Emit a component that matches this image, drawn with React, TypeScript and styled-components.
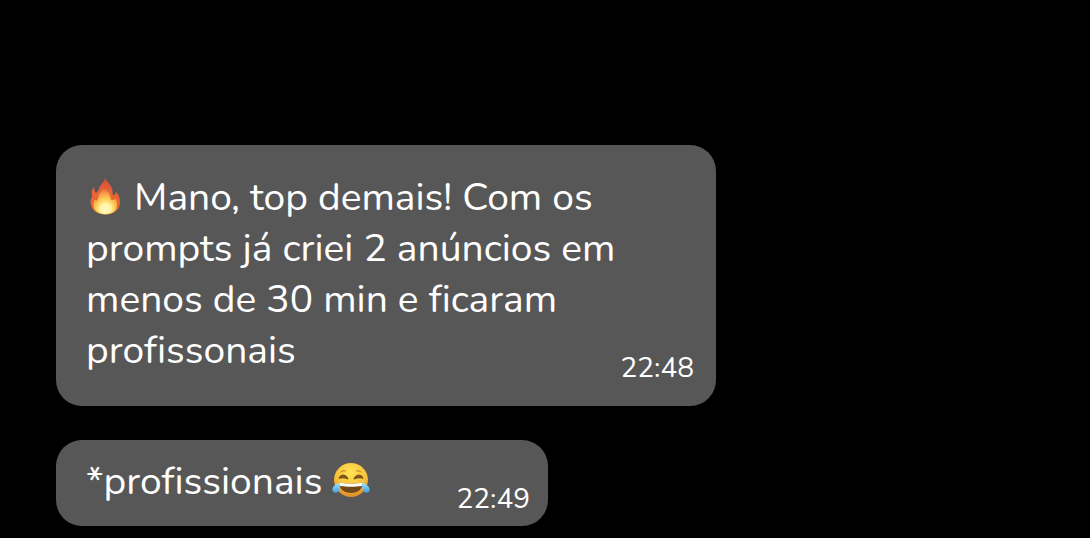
import React from 'react';
import styled, { createGlobalStyle } from 'styled-components';

const GlobalStyle = createGlobalStyle`
  *, *::before, *::after { box-sizing: border-box; }
  html { background: #000; }
  body {
    margin: 0;
    background: #000;
    color: #fff;
    font-family: Nunito, 'Noto Sans', sans-serif;
  }
`;

const Chat = styled.main`
  display: flex;
  flex-direction: column;
  align-items: flex-start;
  gap: 34px;
  padding: 145px 56px 12px;
`;

const Bubble = styled.article<{ $compact?: boolean }>`
  display: grid;
  width: 100%;
  max-width: ${({ $compact }) => ($compact ? 492 : 660)}px;
  padding: ${({ $compact }) => ($compact ? '16px 18px 11px 30px' : '27px 22px 22px 30px')};
  border-radius: 26px;
  background: #575757;
`;

const Message = styled.p`
  grid-area: 1 / 1;
  margin: 0;
  padding-bottom: 8px;
  font-size: 39px;
  line-height: 51px;
  font-variant-ligatures: none;
`;

const Time = styled.time`
  grid-area: 1 / 1;
  align-self: end;
  justify-self: end;
  font-size: 28px;
  line-height: 32px;
`;

const Emoji = styled.svg`
  display: inline-block;
  width: 38px;
  height: 38px;
  vertical-align: -5px;
`;

const Fire = () => (
  <Emoji viewBox="0 0 38 38" role="img" aria-label="Fogo">
    <defs>
      <linearGradient id="flame" x1="0" y1="0" x2="0" y2="1">
        <stop offset="0" stopColor="#d5492f" />
        <stop offset="0.4" stopColor="#e9653a" />
        <stop offset="0.75" stopColor="#ea642c" />
        <stop offset="1" stopColor="#f0a035" />
      </linearGradient>
      <radialGradient id="glow" cx="0.5" cy="0.84" r="0.8">
        <stop offset="0" stopColor="#fffcd0" />
        <stop offset="0.25" stopColor="#fff09a" />
        <stop offset="0.5" stopColor="#fdcd55" />
        <stop offset="0.8" stopColor="#f69a48" stopOpacity="0.8" />
        <stop offset="1" stopColor="#ee7440" stopOpacity="0" />
      </radialGradient>
    </defs>
    <path
      fill="url(#flame)"
      d="M19 0.5C19.500 4 26.500 8 26.500 14.500c0 2 .3 3.500 1.500 3.500 1.500 0 2-1.500 1.500-3.500C32 16.500 34 20 34 25c0 7.500-6 12.500-14.500 12.500S4.500 32 4.500 25c0-2.500.8-4.200 1.800-5.800C5.300 16 5.500 12 8.500 9.500c-.8 3 .2 5 1.500 6.500 1.300-1 2.500-2 2.800-4C13.500 8 18.500 6 19 .5Z"
    />
    <path
      fill="url(#glow)"
      d="M18 9c1 4 6 6 6.500 11.500.2 2 1 3 2.500 2.500 1 0 1.700-.7 2-1.500 1.500 2 2.500 4 2 7-1 5.500-5.500 8.700-11.500 8.700S8 34 7.500 28.500c-.2-2.500.2-4 1.300-6 .7 1.200 1.700 1.500 2.500.5 1.200-1.500.7-3.500 2-6C14.500 14.500 17.500 13 18 9Z"
    />
    <ellipse cx="19.500" cy="31" rx="7" ry="5" fill="#fff8b4" opacity="0.55" />
  </Emoji>
);

const Joy = () => (
  <Emoji viewBox="0 0 38 38" role="img" aria-label="Chorando de rir">
    <defs>
      <radialGradient id="face" cx="0.5" cy="0.28" r="0.75">
        <stop offset="0" stopColor="#ffe451" />
        <stop offset="0.6" stopColor="#f8c23c" />
        <stop offset="1" stopColor="#d98224" />
      </radialGradient>
      <linearGradient id="tear" x1="0" y1="0" x2="0" y2="1">
        <stop offset="0" stopColor="#9de4fa" />
        <stop offset="1" stopColor="#409edb" />
      </linearGradient>
    </defs>
    <circle cx="19" cy="19" r="17" fill="url(#face)" />
    <path fill="none" stroke="#79501b" strokeWidth="1.8" strokeLinecap="round" strokeLinejoin="round" d="M7.500 17c2-3.500 5.500-3.500 8 .5-2-1-4-1.200-6-1M30.500 17c-2-3.500-5.500-3.500-8 .5 2-1 4-1.200 6-1" />
    <path fill="none" stroke="#b47825" strokeWidth="1" strokeLinecap="round" d="M9 11c1.500-1.300 3-1.500 4.500-1M29 11c-1.500-1.300-3-1.500-4.500-1" />
    <path fill="#704819" d="M7 21.500c7 1.500 17 1.500 24 0C30.500 28.500 25.500 32 19 32S7.500 28.500 7 21.500Z" />
    <path fill="#fffdf0" d="M7 21.500c7 1.500 17 1.500 24 0 0 2-.5 3-1.500 3.500-6 1-15 1-21 0-1-.5-1.500-1.500-1.500-3.500Z" />
    <path fill="url(#tear)" d="M8 22C5 22 .5 25 .4 28.500c0 2 1.400 3.300 3.200 3.300C7.200 31.800 8.500 26.500 8 22ZM30 22c3 0 7.500 3 7.600 6.500 0 2-1.400 3.300-3.200 3.300-3.600 0-4.900-5.300-4.400-9.800Z" />
  </Emoji>
);

export default function App() {
  return (
    <>
      <GlobalStyle />
      <Chat>
        <Bubble>
          <Message>
            <Fire /> Mano, top demais! Com os prompts já criei 2 anúncios em menos de 30 min e ficaram
            profissonais
          </Message>
          <Time dateTime="22:48">22:48</Time>
        </Bubble>
        <Bubble $compact>
          <Message>
            *profissionais <Joy />
          </Message>
          <Time dateTime="22:49">22:49</Time>
        </Bubble>
      </Chat>
    </>
  );
}
